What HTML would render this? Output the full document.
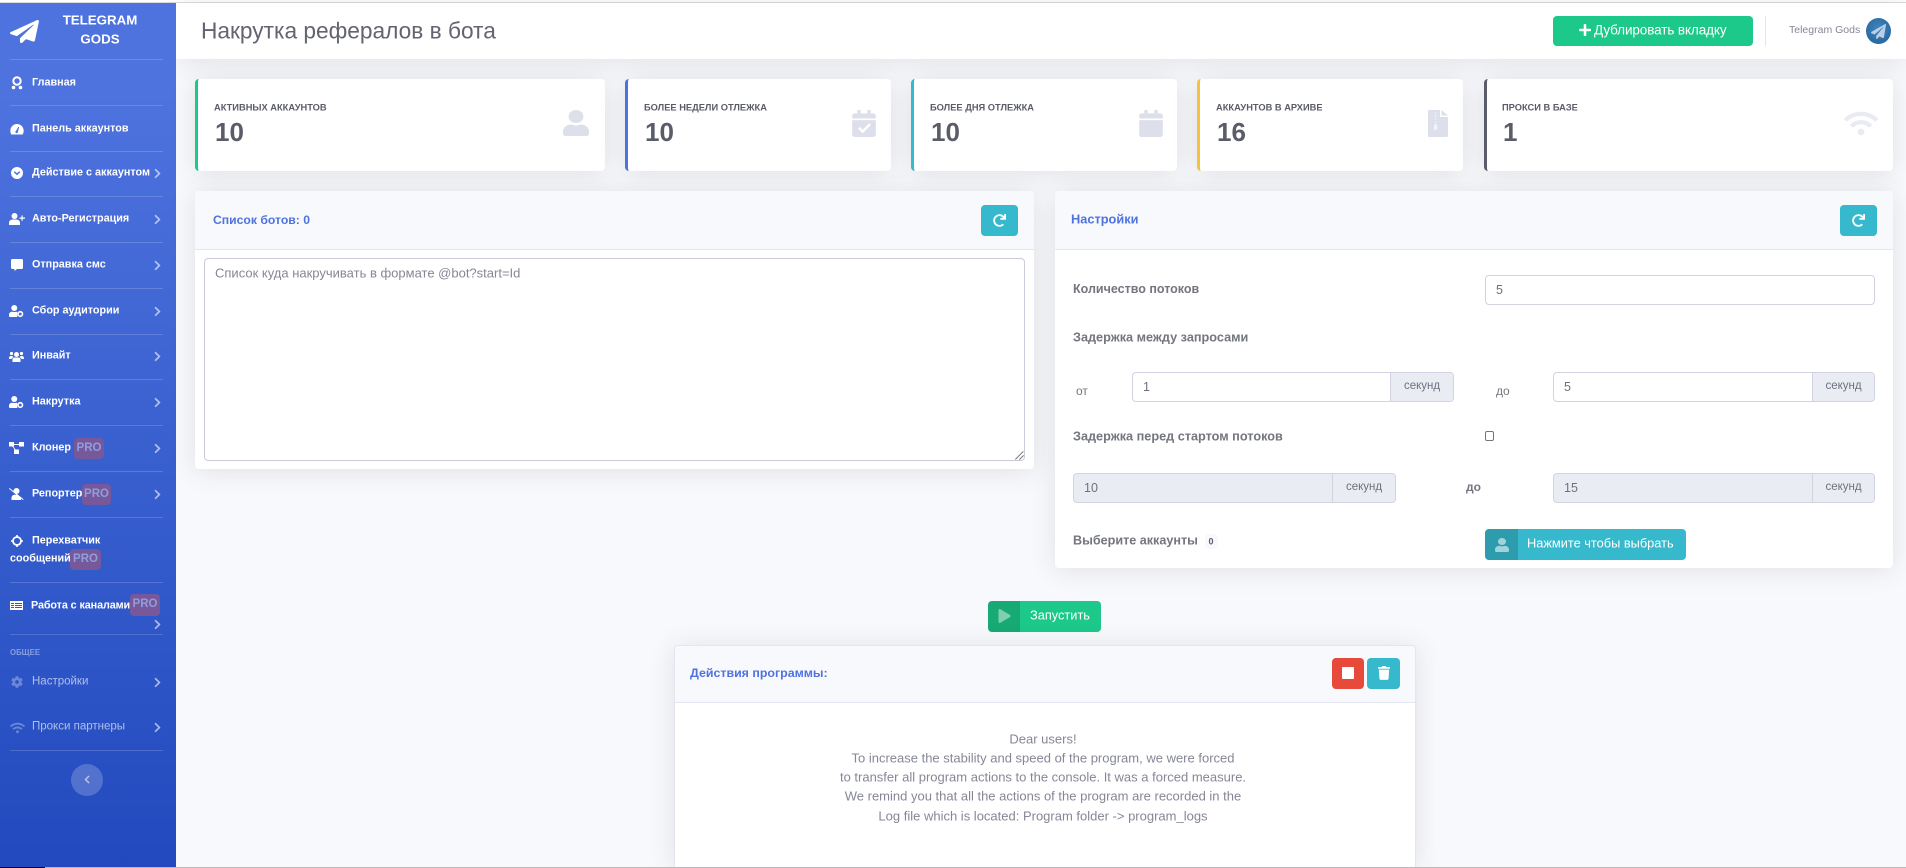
<!DOCTYPE html>
<html lang="ru"><head><meta charset="utf-8"><title>Накрутка рефералов в бота</title>
<style>
*{box-sizing:border-box}
html,body{margin:0;padding:0;width:1906px;height:868px;overflow:hidden;background:#f8f9fc;font-family:"Liberation Sans",sans-serif;color:#858796}
#root{position:relative;width:1906px;height:868px;overflow:hidden}
.a{position:absolute}
.t{position:absolute;white-space:nowrap;line-height:1;transform:translateY(-50%)}
#side{left:0;top:3px;width:176px;height:865px;background:linear-gradient(180deg,#4e73df 10%,#224abe 100%)}
.hr{position:absolute;left:10px;width:153px;height:1px;background:rgba(255,255,255,.17)}
.m{font-size:10.8px;font-weight:bold;color:#fff;left:32px}
.dim{font-weight:normal;color:rgba(255,255,255,.62);font-size:11.5px}
.pro{position:absolute;height:21px;border-radius:4px;background:#76589b;color:#8e9fdd;font-size:11.5px;font-weight:bold;line-height:21px;text-align:center}
svg{position:absolute;display:block;fill:currentColor}
.si{color:#fff}
.ch{color:rgba(255,255,255,.6);left:154px;width:7px;height:11px}
.card{position:absolute;top:79px;height:92px;background:#fff;border-radius:4px;box-shadow:0 2px 26px rgba(58,59,69,.13)}
.lb{top:108px;font-size:9.3px;font-weight:bold;color:#5a5c69}
.val{top:132px;font-size:26px;font-weight:bold;color:#5a5c69}
.sic{color:#dddfeb}
.panel{position:absolute;background:#fff;border-radius:4px;box-shadow:0 2px 26px rgba(58,59,69,.13);overflow:hidden}
.ph{position:absolute;left:0;top:0;right:0;height:59px;background:#f8f9fc;border-bottom:1px solid #e3e6f0}
.pt{font-size:12.2px;font-weight:bold;color:#4e73df}
.btn{position:absolute;border-radius:4px;color:#fff}
.teal{background:#36b9cc}
.lab{font-size:12.7px;font-weight:bold;color:#74767f}
.inp{position:absolute;height:30px;border:1px solid #d1d3e2;border-radius:4px;background:#fff;overflow:hidden;font-size:12.5px;color:#6e707e}
.inp.dis{background:#eaecf4}
.inp span{position:absolute;left:10px;top:8px;line-height:1}
.inp b{position:absolute;top:0;bottom:0;right:0;background:#eaecf4;border-left:1px solid #d1d3e2;font-weight:normal;text-align:center;line-height:26px;font-size:11.5px;color:#6e707e}
.log{font-size:13px;color:#858796;left:674px;width:738px;text-align:center}
</style></head><body><div id="root">
<svg width="0" height="0" style="position:absolute"><defs>
<symbol id="chev" viewBox="0 0 320 512" preserveAspectRatio="none"><path d="M285.476 272.971L91.132 467.314c-9.373 9.373-24.569 9.373-33.941 0l-22.667-22.667c-9.357-9.357-9.375-24.522-.04-33.901L188.505 256 34.484 101.255c-9.335-9.379-9.317-24.544.04-33.901l22.667-22.667c9.373-9.373 24.569-9.373 33.941 0L285.475 239.03c9.373 9.372 9.373 24.568.001 33.941z"/></symbol>
<symbol id="user" viewBox="0 0 448 512" preserveAspectRatio="none"><path d="M224 256c70.7 0 128-57.3 128-128S294.7 0 224 0 96 57.3 96 128s57.3 128 128 128zm89.6 32h-16.7c-22.2 10.2-46.9 16-72.9 16s-50.6-5.8-72.9-16h-16.7C60.2 288 0 348.2 0 422.4V464c0 26.5 21.5 48 48 48h352c26.5 0 48-21.5 48-48v-41.6c0-74.2-60.2-134.4-134.4-134.4z"/></symbol>
<symbol id="plane" viewBox="0 0 512 512" preserveAspectRatio="none"><path d="M476 3.2L12.5 270.6c-18.1 10.4-15.8 35.6 2.2 43.2L121 358.4l287.3-253.2c5.5-4.9 13.3 2.6 8.6 8.3L176 407v80.5c0 23.6 28.5 32.9 42.5 15.8L282 426l124.6 52.2c14.2 6 30.4-2.9 33-18.2l72-432C515 7.8 493.3-6.8 476 3.2z"/></symbol>
<symbol id="cal" viewBox="0 0 448 512"><path d="M12 192h424c6.6 0 12 5.4 12 12v260c0 26.5-21.5 48-48 48H48c-26.5 0-48-21.5-48-48V204c0-6.6 5.4-12 12-12zm436-44v-36c0-26.5-21.5-48-48-48h-48V12c0-6.6-5.4-12-12-12h-40c-6.6 0-12 5.4-12 12v52H160V12c0-6.6-5.4-12-12-12h-40c-6.6 0-12 5.4-12 12v52H48C21.5 64 0 85.5 0 112v36c0 6.6 5.4 12 12 12h424c6.6 0 12-5.4 12-12z"/></symbol>
<symbol id="wifi" viewBox="0 0 640 512"><path d="M634.91 154.88C457.74-8.99 182.19-8.93 5.09 154.88c-6.66 6.16-6.79 16.59-.35 22.98l34.24 33.97c6.14 6.1 16.02 6.23 22.4.38 145.92-133.68 371.3-133.71 517.25 0 6.38 5.85 16.26 5.71 22.4-.38l34.24-33.97c6.43-6.39 6.3-16.82-.36-22.98zM320 352c-35.35 0-64 28.65-64 64s28.65 64 64 64 64-28.65 64-64-28.65-64-64-64zm202.67-83.59c-115.26-101.93-290.21-101.82-405.34 0-6.9 6.1-7.12 16.69-.57 23.15l34.44 33.99c6 5.92 15.66 6.32 22.05.8 83.95-72.57 209.74-72.41 293.49 0 6.39 5.52 16.05 5.13 22.05-.8l34.44-33.99c6.56-6.46 6.33-17.06-.56-23.15z"/></symbol>
<symbol id="redo" viewBox="0 0 512 512"><path d="M500.33 0h-47.41a12 12 0 0 0-12 12.57l4 82.76A247.42 247.42 0 0 0 256 8C119.34 8 8.05 119.53 8 256.19 7.95 393.07 119.06 504 256 504a247.1 247.1 0 0 0 166.18-63.91 12 12 0 0 0 .48-17.43l-34-34a12 12 0 0 0-16.38-.55A176 176 0 1 1 402.1 157.8l-101.53-4.87a12 12 0 0 0-12.57 12v47.41a12 12 0 0 0 12 12h200.33a12 12 0 0 0 12-12V12a12 12 0 0 0-12-12z"/></symbol>
<symbol id="cog" viewBox="0 0 512 512"><path d="M487.4 315.7l-42.6-24.6c4.3-23.2 4.3-47 0-70.2l42.6-24.6c4.9-2.8 7.1-8.6 5.5-14-11.1-35.6-30-67.8-54.7-94.6-3.8-4.1-10-5.1-14.8-2.3L380.8 110c-17.9-15.4-38.5-27.3-60.8-35.1V25.8c0-5.6-3.9-10.5-9.4-11.7-36.7-8.2-74.3-7.8-109.2 0-5.5 1.2-9.4 6.1-9.4 11.7V75c-22.2 7.9-42.8 19.8-60.8 35.1L88.7 85.5c-4.9-2.8-11-1.9-14.8 2.3-24.7 26.7-43.6 58.9-54.7 94.6-1.7 5.4.6 11.2 5.5 14L67.3 221c-4.3 23.2-4.3 47 0 70.2l-42.6 24.6c-4.9 2.8-7.1 8.6-5.5 14 11.1 35.6 30 67.8 54.7 94.6 3.8 4.1 10 5.1 14.8 2.3l42.6-24.6c17.9 15.4 38.5 27.3 60.8 35.1v49.2c0 5.6 3.9 10.5 9.4 11.7 36.7 8.2 74.3 7.8 109.2 0 5.5-1.2 9.4-6.1 9.4-11.7v-49.2c22.2-7.9 42.8-19.8 60.8-35.1l42.6 24.6c4.9 2.8 11 1.9 14.8-2.3 24.7-26.7 43.6-58.9 54.7-94.6 1.5-5.5-.7-11.3-5.6-14.1zM256 336c-44.1 0-80-35.9-80-80s35.9-80 80-80 80 35.9 80 80-35.9 80-80 80z"/></symbol>
<symbol id="ucog" viewBox="0 0 20 16"><circle cx="7" cy="4" r="4"/><path d="M1 16a2 2 0 0 1-1-2v-1c0-2.500 2-4 4-4h.6C5.500 9.500 8.500 9.500 9.400 9c.6 0 1 .1 1.600.3V16z"/><circle cx="15" cy="12" r="3" fill="none" stroke="currentColor" stroke-width="2.200"/></symbol>
</defs></svg>

<div class="a" style="left:0;top:0;width:1906px;height:2px;background:#fff"></div>
<div class="a" style="left:0;top:2px;width:1906px;height:1px;background:#dcdcde"></div>

<div class="a" style="left:176px;top:3px;width:1730px;height:56px;background:#fff;box-shadow:0 2px 26px rgba(58,59,69,.13)"></div>
<div class="t" style="left:201px;top:31px;font-size:22.7px;color:#62646f">Накрутка рефералов в бота</div>
<div class="btn" style="left:1553px;top:16px;width:200px;height:30px;background:#1cc88a"></div>
<svg viewBox="0 0 448 512" style="left:1579px;top:23px;width:12px;height:14px;color:#fff"><path d="M416 208H272V64c0-17.670-14.330-32-32-32h-32c-17.670 0-32 14.330-32 32v144H32c-17.670 0-32 14.330-32 32v32c0 17.670 14.330 32 32 32h144v144c0 17.670 14.330 32 32 32h32c17.670 0 32-14.330 32-32V304h144c17.670 0 32-14.330 32-32v-32c0-17.670-14.330-32-32-32z"/></svg>
<div class="t" style="left:1594px;top:30px;font-size:13.5px;color:#fff;letter-spacing:-.1px">Дублировать вкладку</div>
<div class="a" style="left:1765px;top:16px;width:1px;height:30px;background:#e3e6f0"></div>
<div class="t" style="left:1789px;top:29.500px;font-size:10.500px;color:#858796">Telegram Gods</div>
<div class="a" style="left:1866px;top:18px;width:25px;height:26px;border-radius:50%;background:radial-gradient(circle at 50% 40%,#3f85bd,#215f96)"></div>
<svg style="left:1871px;top:24px;width:15px;height:15px;color:#b8cfe4"><use href="#plane"/></svg>

<div id="side" class="a"></div>
<svg style="left:10px;top:20px;width:29px;height:23px;color:#fff"><use href="#plane"/></svg>
<div class="t" style="left:50px;width:100px;text-align:center;top:20px;font-size:13.3px;font-weight:bold;color:#fff">TELEGRAM</div>
<div class="t" style="left:50px;width:100px;text-align:center;top:39px;font-size:13.3px;font-weight:bold;color:#fff">GODS</div>

<div class="hr" style="top:59px"></div><div class="hr" style="top:105px"></div><div class="hr" style="top:151px"></div><div class="hr" style="top:196px"></div><div class="hr" style="top:242px"></div><div class="hr" style="top:288px"></div><div class="hr" style="top:334px"></div><div class="hr" style="top:379px"></div><div class="hr" style="top:425px"></div><div class="hr" style="top:471px"></div><div class="hr" style="top:517px"></div><div class="hr" style="top:582px"></div><div class="hr" style="top:634px"></div><div class="hr" style="top:750px"></div>

<!-- award -->
<svg class="si" viewBox="0 0 12 14" style="left:11px;top:76px;width:12px;height:14px"><circle cx="6" cy="5" r="3.700" fill="none" stroke="currentColor" stroke-width="2"/><circle cx="2.500" cy="11.500" r="1.800"/><circle cx="9.500" cy="11.500" r="1.800"/></svg>
<div class="t m" style="top:83px">Главная</div>
<!-- dashboard -->
<svg class="si" viewBox="0 0 14 11" style="left:10px;top:124px;width:14px;height:10.500px"><path d="M7 0a7 7 0 0 0-7 7c0 1.400.4 2.800 1 4h12c.6-1.200 1-2.600 1-4a7 7 0 0 0-7-7zm.9 8.500a1.300 1.300 0 1 1-1.800-1.400L8.300 3l.9.400z"/></svg>
<div class="t m" style="top:129px">Панель аккаунтов</div>
<!-- chevron circle -->
<svg class="si" viewBox="0 0 12 12" style="left:11px;top:167px;width:12px;height:12px"><path fill-rule="evenodd" d="M6 0a6 6 0 1 1 0 12A6 6 0 0 1 6 0zM2.800 5.200L6 8.300l3.200-3.100-1-1L6 6.300 3.800 4.200z"/></svg>
<div class="t m" style="top:173px">Действие с аккаунтом</div>
<svg class="ch" style="top:168px"><use href="#chev"/></svg>
<!-- user plus -->
<svg class="si" viewBox="0 0 16 12" style="left:9px;top:213px;width:16px;height:12px"><circle cx="5.500" cy="3" r="3"/><path d="M0 12v-2c0-2 1.500-3.500 3.500-3.500h4c2 0 3.500 1.500 3.500 3.500v2zM12.500 2.500h1.200v2H16v1.200h-2.300v2h-1.200v-2H10.500V4.500h2z"/></svg>
<div class="t m" style="top:219px">Авто-Регистрация</div>
<svg class="ch" style="top:214px"><use href="#chev"/></svg>
<!-- comment -->
<svg class="si" viewBox="0 0 12 12" style="left:11px;top:259px;width:12px;height:12px"><path d="M1.500 0h9A1.500 1.500 0 0 1 12 1.500v7A1.500 1.500 0 0 1 10.500 10H6l-2.500 2V10h-2A1.500 1.500 0 0 1 0 8.500v-7A1.500 1.500 0 0 1 1.500 0z"/></svg>
<div class="t m" style="top:265px">Отправка смс</div>
<svg class="ch" style="top:260px"><use href="#chev"/></svg>
<svg class="si" style="left:9px;top:305px;width:15px;height:12px"><use href="#ucog"/></svg>
<div class="t m" style="top:311px">Сбор аудитории</div>
<svg class="ch" style="top:306px"><use href="#chev"/></svg>
<!-- users -->
<svg class="si" viewBox="0 0 15 11" style="left:9px;top:351px;width:15px;height:11px"><circle cx="7.500" cy="3.500" r="2.500"/><circle cx="2.500" cy="2.500" r="1.600"/><circle cx="12.500" cy="2.500" r="1.600"/><path d="M3.500 11V8.500C3.500 7 5 6.500 6 6.500h3c1 0 2.500.5 2.500 2V11zM0 7.500C0 5.500 1 5 2 5h1.500c.3.500.7 1 1 1.200C3.500 6.700 2.800 7.300 2.500 8H0zM15 7.500c0-2-1-2.500-2-2.500h-1.500c-.3.500-.7 1-1 1.200 1 .5 1.700 1.100 2 1.800H15z"/></svg>
<div class="t m" style="top:356px">Инвайт</div>
<svg class="ch" style="top:351px"><use href="#chev"/></svg>
<svg class="si" style="left:9px;top:396px;width:15px;height:12px"><use href="#ucog"/></svg>
<div class="t m" style="top:402px">Накрутка</div>
<svg class="ch" style="top:397px"><use href="#chev"/></svg>
<!-- diagram -->
<svg class="si" viewBox="0 0 15 12" style="left:9px;top:442px;width:15px;height:12px"><rect x="0" y="0" width="5" height="4.500"/><rect x="10" y="0" width="5" height="4.500"/><rect x="5" y="7.500" width="5" height="4.500"/><path d="M4 2h7v1H4zM3 4h1l3 4H6z"/></svg>
<div class="t m" style="top:448px">Клонер</div>
<div class="pro" style="left:74px;top:438px;width:30px">PRO</div>
<svg class="ch" style="top:443px"><use href="#chev"/></svg>
<!-- user slash -->
<svg class="si" viewBox="0 0 15 12" style="left:9px;top:488px;width:15px;height:12px"><circle cx="7.500" cy="3" r="3"/><path d="M2.500 12V10c0-1.800 1.500-3.200 3-3.200h3.500l3 3.200V12zM.6 0l14 11.200-.7.800L0 .8z"/></svg>
<div class="t m" style="top:494px">Репортер</div>
<div class="pro" style="left:82px;top:484px;width:29px">PRO</div>
<svg class="ch" style="top:489px"><use href="#chev"/></svg>
<!-- target -->
<svg class="si" viewBox="0 0 12 12" style="left:11px;top:535px;width:12px;height:12px"><circle cx="6" cy="6" r="4" fill="none" stroke="currentColor" stroke-width="1.800"/><path d="M5.200 0h1.600v3H5.200zM5.200 9h1.600v3H5.200zM0 5.200h3v1.600H0zM9 5.200h3v1.600H9z"/></svg>
<div class="t m" style="top:541px">Перехватчик</div>
<div class="t m" style="top:559px;left:10px">сообщений</div>
<div class="pro" style="left:70px;top:549px;width:31px">PRO</div>
<!-- table -->
<svg class="si" viewBox="0 0 13 9" style="left:10px;top:601px;width:13px;height:9px"><path fill-rule="evenodd" d="M0 0h13v9H0zM1 2v1h3V2zM5 2v1h7V2zM1 4v1h3V4zM5 4v1h7V4zM1 6v1h3V6zM5 6v1h7V6z"/></svg>
<div class="t m" style="top:606px;left:31px;letter-spacing:-.1px">Работа с каналами</div>
<div class="pro" style="left:130px;top:594px;width:30px;height:22px;line-height:21px">PRO</div>
<svg class="ch" style="top:619px"><use href="#chev"/></svg>

<div class="t" style="left:10px;top:653px;font-size:7.800px;font-weight:bold;color:rgba(255,255,255,.42)">ОБЩЕЕ</div>
<svg style="left:11px;top:676px;width:12px;height:12px;color:rgba(255,255,255,.3)"><use href="#cog"/></svg>
<div class="t m dim" style="top:682px">Настройки</div>
<svg class="ch" style="top:677px"><use href="#chev"/></svg>
<svg style="left:10px;top:722px;width:15px;height:12px;color:rgba(255,255,255,.3)"><use href="#wifi"/></svg>
<div class="t m dim" style="top:727px">Прокси партнеры</div>
<svg class="ch" style="top:722px"><use href="#chev"/></svg>
<div class="a" style="left:71px;top:764px;width:32px;height:32px;border-radius:50%;background:rgba(255,255,255,.2)"></div>
<svg style="left:84px;top:775px;width:6px;height:9px;color:rgba(255,255,255,.6);transform:scaleX(-1)"><use href="#chev"/></svg>

<div class="card" style="left:195px;width:410px;border-left:3px solid #1cc88a"></div>
<div class="card" style="left:625px;width:266px;border-left:3px solid #4e73df"></div>
<div class="card" style="left:911px;width:266px;border-left:3px solid #36b9cc"></div>
<div class="card" style="left:1197px;width:266px;border-left:3px solid #f6c23e"></div>
<div class="card" style="left:1484px;width:409px;border-left:3px solid #5a5c69"></div>
<div class="t lb" style="left:214px">АКТИВНЫХ АККАУНТОВ</div><div class="t val" style="left:215px">10</div>
<div class="t lb" style="left:644px">БОЛЕЕ НЕДЕЛИ ОТЛЕЖКА</div><div class="t val" style="left:645px">10</div>
<div class="t lb" style="left:930px">БОЛЕЕ ДНЯ ОТЛЕЖКА</div><div class="t val" style="left:931px">10</div>
<div class="t lb" style="left:1216px">АККАУНТОВ В АРХИВЕ</div><div class="t val" style="left:1217px">16</div>
<div class="t lb" style="left:1502px">ПРОКСИ В БАЗЕ</div><div class="t val" style="left:1503px">1</div>
<svg class="sic" style="left:563px;top:110px;width:26px;height:26px"><use href="#user"/></svg>
<svg class="sic" style="left:852px;top:110px;width:24px;height:27px"><use href="#cal"/></svg>
<svg viewBox="0 0 24 27" style="left:852px;top:110px;width:24px;height:27px;color:#fff"><path d="M6 18.500l1.700-1.700 3 3 6.500-6.500 1.700 1.700-8.200 8.200z"/></svg>
<svg class="sic" style="left:1139px;top:110px;width:24px;height:27px"><use href="#cal"/></svg>
<svg viewBox="0 0 20 27" style="left:1428px;top:110px;width:20px;height:27px;color:#dddfeb"><path d="M1.200 0H12v7h8v18.800A1.200 1.200 0 0 1 18.800 27H1.200A1.200 1.200 0 0 1 0 25.800V1.200A1.200 1.200 0 0 1 1.200 0zM13.500 0l6.500 5.500h-6.500z"/><path d="M7 2h1.200v1.500H7zM7 5h1.200v1.500H7zM7 8h1.200v1.500H7zM7 11h1.200v1.500H7zM6.500 14h2.200l.8 4a1.800 1.800 0 1 1-3.800 0z" fill="#f2f3f8"/></svg>
<svg style="left:1844px;top:110px;width:34px;height:27px;color:#e9eaf2"><use href="#wifi"/></svg>

<!-- left panel -->
<div class="panel" style="left:195px;top:191px;width:839px;height:278px"><div class="ph"></div></div>
<div class="t pt" style="left:213px;top:220px">Список ботов: 0</div>
<div class="btn teal" style="left:981px;top:205px;width:37px;height:31px"></div>
<svg style="left:993px;top:214px;width:13px;height:13px;color:#fff"><use href="#redo"/></svg>
<div class="a" style="left:204px;top:258px;width:821px;height:203px;background:#fff;border:1px solid #c9cbdc;border-radius:4px"></div>
<div class="t" style="left:215px;top:273px;font-size:13px;color:#858796">Список куда накручивать в формате @bot?start=Id</div>
<svg viewBox="0 0 10 10" style="left:1014px;top:450px;width:10px;height:10px;color:#777"><path d="M9 1l.7.7-8 8L1 9zM9.300 5l.7.7L5.700 10 5 9.300z"/></svg>

<!-- right panel -->
<div class="panel" style="left:1055px;top:191px;width:838px;height:377px"><div class="ph"></div></div>
<div class="t pt" style="left:1071px;top:220px;font-size:12.8px">Настройки</div>
<div class="btn teal" style="left:1840px;top:205px;width:37px;height:31px"></div>
<svg style="left:1852px;top:214px;width:13px;height:13px;color:#fff"><use href="#redo"/></svg>

<div class="t lab" style="left:1073px;top:289px;font-size:12.5px">Количество потоков</div>
<div class="inp" style="left:1485px;top:275px;width:390px"><span>5</span></div>
<div class="t lab" style="left:1073px;top:338px">Задержка между запросами</div>
<div class="t" style="left:1076px;top:391px;font-size:12px;color:#74767f">от</div>
<div class="inp" style="left:1132px;top:372px;width:322px"><span>1</span><b style="width:63px">секунд</b></div>
<div class="t" style="left:1496px;top:391px;font-size:12px;color:#74767f">до</div>
<div class="inp" style="left:1553px;top:372px;width:322px"><span>5</span><b style="width:62px">секунд</b></div>
<div class="t lab" style="left:1073px;top:437px">Задержка перед стартом потоков</div>
<div class="a" style="left:1485px;top:431px;width:9px;height:10px;border:1px solid #767676;border-radius:2px;background:#fff"></div>
<div class="inp dis" style="left:1073px;top:473px;width:323px"><span>10</span><b style="width:63px">секунд</b></div>
<div class="t lab" style="left:1466px;top:487px;font-size:12px">до</div>
<div class="inp dis" style="left:1553px;top:473px;width:322px"><span>15</span><b style="width:62px">секунд</b></div>
<div class="t lab" style="left:1073px;top:541px;font-size:12.6px">Выберите аккаунты</div>
<div class="a" style="left:1205px;top:534px;width:13px;height:15px;border-radius:4px;background:#f8f9fc"></div>
<div class="t" style="left:1208.500px;top:541.500px;font-size:9px;font-weight:bold;color:#5a5c69">0</div>
<div class="btn teal" style="left:1485px;top:529px;width:201px;height:31px;overflow:hidden"><div class="a" style="left:0;top:0;width:33px;height:31px;background:rgba(0,0,0,.15)"></div></div>
<svg style="left:1495px;top:538px;width:14px;height:14px;color:rgba(255,255,255,.55)"><use href="#user"/></svg>
<div class="t" style="left:1527px;top:544px;font-size:12.800px;color:#fff">Нажмите чтобы выбрать</div>

<!-- run -->
<div class="btn" style="left:988px;top:601px;width:113px;height:31px;background:#1cc88a;overflow:hidden"><div class="a" style="left:0;top:0;width:32px;height:31px;background:rgba(0,0,0,.15)"></div></div>
<svg viewBox="0 0 12 14" style="left:998px;top:609px;width:13px;height:14px;color:rgba(255,255,255,.45)"><path d="M0 1.200C0 .2 1-.3 1.800.2l9.700 5.800c.7.400.7 1.500 0 2l-9.700 5.800C1 14.300 0 13.800 0 12.800z"/></svg>
<div class="t" style="left:1030px;top:616px;font-size:12.800px;color:#fff">Запустить</div>

<!-- log panel -->
<div class="panel" style="left:674px;top:645px;width:742px;height:222px;border:1px solid #e3e6f0;border-bottom:0;border-radius:4px 4px 0 0"><div class="ph" style="height:57px"></div></div>
<div class="t pt" style="left:690px;top:673px;font-size:12.4px">Действия программы:</div>
<div class="btn" style="left:1332px;top:658px;width:32px;height:31px;background:#e74a3b"></div>
<div class="a" style="left:1342px;top:667px;width:12px;height:12px;background:#fff;border-radius:1px"></div>
<div class="btn teal" style="left:1367px;top:658px;width:33px;height:31px"></div>
<svg viewBox="0 0 448 512" style="left:1378px;top:666px;width:12px;height:14px;color:#fff"><path d="M432 32H312l-9.400-18.700A24 24 0 0 0 281.100 0H166.800a23.720 23.720 0 0 0-21.400 13.300L136 32H16A16 16 0 0 0 0 48v32a16 16 0 0 0 16 16h416a16 16 0 0 0 16-16V48a16 16 0 0 0-16-16zM53.200 467a48 48 0 0 0 47.900 45h245.800a48 48 0 0 0 47.900-45L416 128H32z"/></svg>
<div class="t log" style="top:739px">Dear users!</div>
<div class="t log" style="top:758px">To increase the stability and speed of the program, we were forced</div>
<div class="t log" style="top:777px">to transfer all program actions to the console. It was a forced measure.</div>
<div class="t log" style="top:796px">We remind you that all the actions of the program are recorded in the</div>
<div class="t log" style="top:816px">Log file which is located: Program folder -&gt; program_logs</div>

<div class="a" style="left:0;top:867px;width:1906px;height:1px;background:#b9b9bb"></div>
<div class="a" style="left:0;top:867px;width:45px;height:1px;background:#05051a"></div>
</div></body></html>
